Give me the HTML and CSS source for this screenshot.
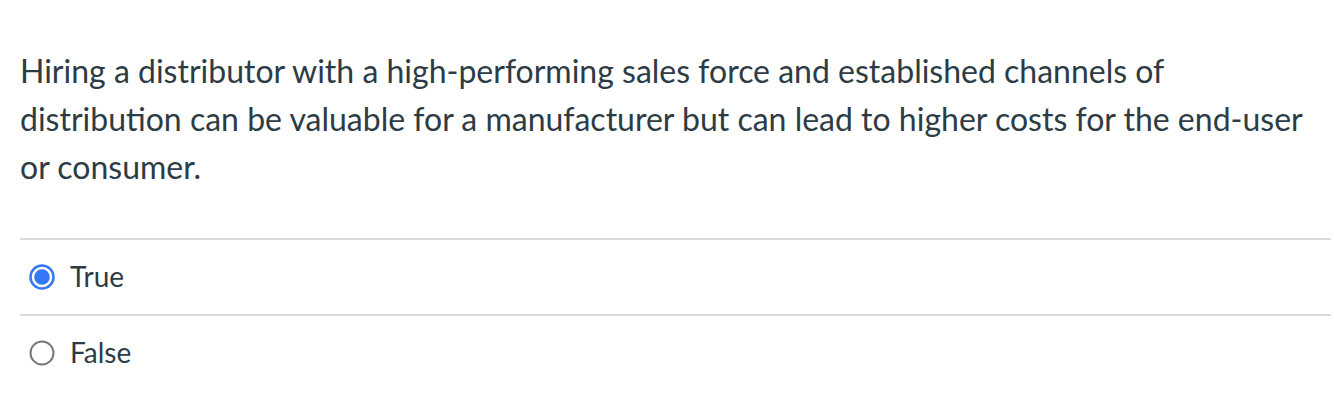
FILE: index.html
```html
<!DOCTYPE html>
<html lang="en">
<head>
<meta charset="utf-8">
<title>Question</title>
<link rel="stylesheet" href="styles.css">
</head>
<body>
<div class="question">
  <p class="question-text">Hiring a distributor with a high-performing sales force and established channels of distribution can be valuable for a manufacturer but can lead to higher costs for the end-user or consumer.</p>
  <div class="answers">
    <label class="answer">
      <span class="radio">
        <svg width="26" height="26" viewBox="0 0 26 26"><circle cx="13" cy="13" r="11.5" fill="#fff" stroke="#3478f6" stroke-width="2.5"/><circle cx="13" cy="13" r="7.8" fill="#3478f6"/></svg>
      </span>
      <span class="answer-text">True</span>
    </label>
    <label class="answer">
      <span class="radio">
        <svg width="26" height="26" viewBox="0 0 26 26"><circle cx="13" cy="13" r="11.5" fill="#fff" stroke="#767676" stroke-width="2"/></svg>
      </span>
      <span class="answer-text">False</span>
    </label>
  </div>
</div>
</body>
</html>
```

FILE: styles.css
```css
html, body {
  margin: 0;
  padding: 0;
  background: #fff;
}
body {
  font-family: Lato, "Open Sans", sans-serif;
  color: #2d3b45;
}
.question {
  width: 1311px;
  padding: 47px 0 0 20px;
}
.question-text {
  margin: 0;
  font-size: 32px;
  line-height: 48px;
}
.answers {
  margin-top: 47px;
}
.answer {
  display: flex;
  align-items: center;
  height: 74px;
  border-top: 2px solid #dcdcdc;
}
.radio {
  display: flex;
  width: 26px;
  height: 26px;
  margin-left: 9px;
  margin-right: 15px;
}
.answer-text {
  font-size: 28px;
  line-height: 32px;
  margin-bottom: 3px;
}
```
